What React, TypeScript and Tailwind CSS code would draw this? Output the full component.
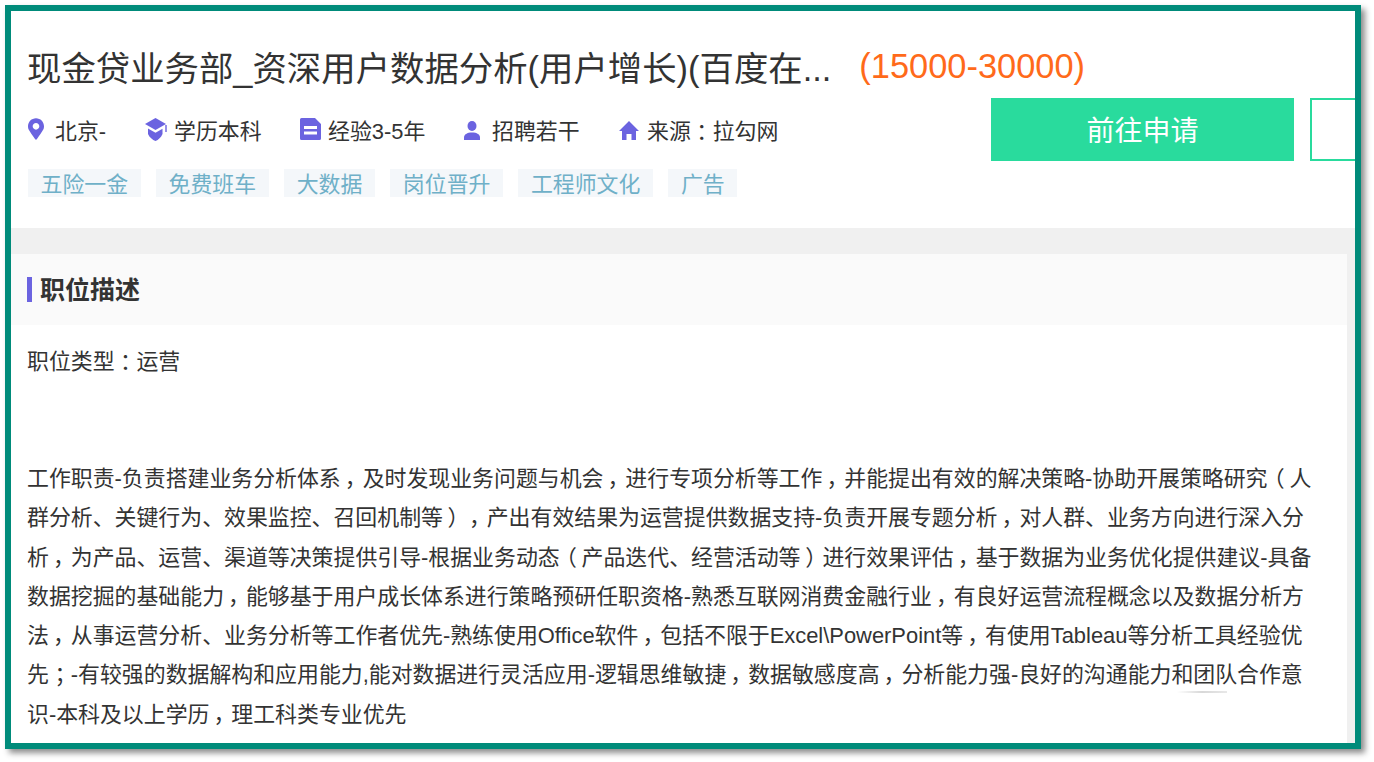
import React from 'react';
import { FaMapMarkerAlt } from 'react-icons/fa';

const tags = ['五险一金', '免费班车', '大数据', '岗位晋升', '工程师文化', '广告'];

const bodyLines = [
  '工作职责-负责搭建业务分析体系，及时发现业务问题与机会，进行专项分析等工作，并能提出有效的解决策略-协助开展策略研究（人',
  '群分析、关键行为、效果监控、召回机制等），产出有效结果为运营提供数据支持-负责开展专题分析，对人群、业务方向进行深入分',
  '析，为产品、运营、渠道等决策提供引导-根据业务动态（产品迭代、经营活动等）进行效果评估，基于数据为业务优化提供建议-具备',
  '数据挖掘的基础能力，能够基于用户成长体系进行策略预研任职资格-熟悉互联网消费金融行业，有良好运营流程概念以及数据分析方',
  '法，从事运营分析、业务分析等工作者优先-熟练使用Office软件，包括不限于Excel\\PowerPoint等，有使用Tableau等分析工具经验优',
  '先；-有较强的数据解构和应用能力,能对数据进行灵活应用-逻辑思维敏捷，数据敏感度高，分析能力强-良好的沟通能力和团队合作意',
  '识-本科及以上学历，理工科类专业优先',
];

// the original font centres these in their em box
const Cn = ({ text }: { text: string }) => (
  <>
    {text.split(/([，；：（）])/).map((part, i) =>
      i % 2 ? (
        <span key={i} className="inline-block w-[1em] text-center [font-feature-settings:'palt']">
          {part}
        </span>
      ) : (
        part
      )
    )}
  </>
);

const CapIcon = () => (
  <svg viewBox="0 0 22 23" className="-mt-[6px] h-[23px] w-[22px] text-[#6b63e0]" fill="currentColor">
    <path d="M10.500 0 21 6l-10.500 6L0 6z" />
    <path d="M3 10.500l7.500 4.300 7-4V16c-1.500 3.500-4 5.800-7 7-3-1.200-6-3.500-7.500-7z" />
    <rect x="20.300" y="7" width="1.400" height="7" />
  </svg>
);

const FileIcon = () => (
  <svg viewBox="0 0 21 22" className="-mt-[6px] h-[22px] w-[21px] text-[#6b63e0]" fill="currentColor">
    <path
      fillRule="evenodd"
      d="M1.500 0H15l6 6v14.500a1.500 1.500 0 0 1-1.500 1.500h-18A1.500 1.500 0 0 1 0 20.500v-19A1.500 1.500 0 0 1 1.500 0zM4 8v3h13V8zm0 5.500v3h13v-3z"
    />
  </svg>
);

const PersonIcon = () => (
  <svg viewBox="0 0 16 19" className="-mt-[3px] h-[19px] w-4 text-[#6b63e0]" fill="currentColor">
    <ellipse cx="8" cy="5" rx="4.500" ry="5" />
    <path d="M0 19v-2.500c0-3 3-5 8-5s8 2 8 5V19z" />
  </svg>
);

const HouseIcon = () => (
  <svg viewBox="0 0 20 19" className="-mt-[3px] h-[19px] w-5 text-[#6b63e0]" fill="currentColor">
    <path d="M10 0l10 10h-3v9h-4.500v-6h-5v6H3v-9H0z" />
  </svg>
);

export default function App() {
  return (
    <div className="h-[762px] w-[1374px] bg-white pl-[5px] pt-[5px] font-['Liberation_Sans','Noto_Sans_CJK_SC',sans-serif] text-[21.900px] text-[#333]">
      <div className="relative h-[744px] w-[1356px] overflow-hidden border-[6px] border-[#008b7a] bg-white shadow-[4px_4px_6px_rgba(0,0,0,0.45)]">
        <header className="h-[217px] pl-[17px]">
          <div className="-ml-px flex items-start gap-[28px] pt-[33px] leading-[44px]">
            <h1 className="mt-[3px] text-[34.400px] font-normal text-[#333]">现金贷业务部_资深用户数据分析(用户增长)(百度在...</h1>
            <span className="text-[34.400px] text-[#ff6a1a]">(15000-30000)</span>
          </div>
          <div className="mt-[7px] flex items-start">
            <div className="w-[963px] shrink-0">
              <div className="mt-[19px] flex h-[30px] items-center leading-[30px]">
                <FaMapMarkerAlt className="-mt-[6px] h-[22px] w-4 text-[#6b63e0]" />
                <span className="ml-[11px] w-[90px]">北京-</span>
                <CapIcon />
                <span className="ml-[7px] w-[126px]">学历本科</span>
                <FileIcon />
                <span className="ml-[7px] w-[136px]">经验3-5年</span>
                <PersonIcon />
                <span className="ml-[12px] w-[127px]">招聘若干</span>
                <HouseIcon />
                <span className="ml-[8px]">
                  <Cn text="来源：拉勾网" />
                </span>
              </div>
              <div className="mt-[22px] flex gap-[15.500px]">
                {tags.map((tag) => (
                  <span key={tag} className="h-7 bg-[#f4f7fa] px-[12.500px] leading-[31px] text-[#6fb0c8]">
                    {tag}
                  </span>
                ))}
              </div>
            </div>
            <div className="flex shrink-0 gap-4">
              <button className="h-[63px] w-[303px] bg-[#29db9d] pt-1 text-[28px] text-white">前往申请</button>
              <button className="h-[63px] w-[120px] border-2 border-[#29db9d] bg-white" />
            </div>
          </div>
        </header>

        <main className="bg-[#f0f0f0] pr-2 pt-[26px]">
          <div className="flex h-[71px] items-center bg-[#fafafa] pl-[16px]">
            <i className="h-[25px] w-[5px] bg-[#6b63e0]" />
            <h2 className="ml-2 pt-0.5 text-[25px] font-bold text-[#333]">职位描述</h2>
          </div>
          <section className="h-[420px] bg-white pl-[16px] pt-[17px] text-[#333]">
            <p className="leading-[40px]">
              <Cn text="职位类型：运营" />
            </p>
            <div className="mt-[77px]">
              {bodyLines.map((line) => (
                <p key={line} className="whitespace-nowrap leading-[39.300px]">
                  <Cn text={line} />
                </p>
              ))}
            </div>
          </section>
        </main>
        <div className="absolute left-[1166px] top-[680px] h-0.5 w-[50px] bg-gradient-to-r from-white via-[#d8d8d8] to-[#e8e8e8]" />
      </div>
    </div>
  );
}
